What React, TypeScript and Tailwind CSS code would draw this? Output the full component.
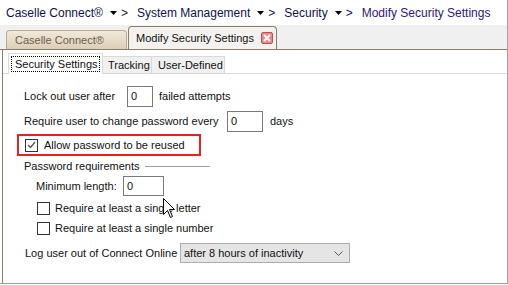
import React from "react";

function Caret() {
  return (
    <svg width="7" height="4" viewBox="0 0 7 4" className="ml-[7px]">
      <path d="M0 0H7L3.5 4Z" fill="#000" />
    </svg>
  );
}

function Crumb({ label, last }: { label: string; last?: boolean }) {
  return (
    <div className="flex items-center">
      <span className={last ? "text-[#2f1680]" : "text-[#10104a]"}>{label}</span>
      {!last && (
        <>
          <Caret />
          <span className="ml-[4px] mr-[9px] text-[#10104a]">&gt;</span>
        </>
      )}
    </div>
  );
}

function Checkbox({ checked }: { checked?: boolean }) {
  return (
    <div className="w-[13px] h-[13px] border border-[#333] bg-white flex items-center justify-center shrink-0">
      {checked && (
        <svg width="9" height="8" viewBox="0 0 9 8">
          <path d="M1 4L3.5 6.5L8 1" stroke="#555" strokeWidth="1.3" fill="none" />
        </svg>
      )}
    </div>
  );
}

function TextBox({ value, w }: { value: string; w: string }) {
  return (
    <div className={`${w} h-full border border-[#7a7a7a] bg-white pl-[3px] flex items-center`}>
      {value}
    </div>
  );
}

export default function App() {
  return (
    <div
      className="relative w-[508px] h-[284px] overflow-hidden bg-white border-r border-b border-[#a0a0a0] flex flex-col text-[11px] text-[#111]"
      style={{ fontFamily: '"Liberation Sans", Arial, sans-serif' }}
    >
      {/* breadcrumb */}
      <div className="h-[25px] flex items-center pl-[6px] text-[12px] whitespace-nowrap">
        <Crumb label="Caselle Connect®" />
        <Crumb label="System Management" />
        <Crumb label="Security" />
        <Crumb label="Modify Security Settings" last />
      </div>

      {/* document tabs */}
      <div className="h-[25px] bg-[#f0f0f0] border-b border-[#8b7d6b] flex items-end pl-[6px]">
        <div className="w-[121px] h-[19px] rounded-t-[4px] border border-b-0 border-[#b9ab94] bg-gradient-to-b from-[#f1e9da] to-[#dccfb6] text-[#6e5d4e] pl-[8px] flex items-center">
          Caselle Connect®
        </div>
        <div className="w-[149px] h-[23px] ml-[1px] rounded-t-[4px] border border-b-0 border-[#8b7d6b] bg-[#f3f2ef] pl-[7px] pr-[3px] flex items-center">
          <span>Modify Security Settings</span>
          <div className="ml-auto w-[12px] h-[12px] rounded-[2px] border border-[#c0504d] bg-[#e98c8c] flex items-center justify-center">
            <svg width="8" height="8" viewBox="0 0 8 8">
              <path d="M1 1L7 7M7 1L1 7" stroke="#fff" strokeWidth="2" />
            </svg>
          </div>
        </div>
      </div>

      {/* content */}
      <div className="flex-1 ml-[2px] border-l border-[#8b7d6b] flex flex-col">
        <div className="h-[24px] flex items-end pl-[5px] border-b border-[#d9d9d9]">
          <div className="w-[95px] h-[21px] -mb-px border border-b-0 border-[#d9d9d9] bg-white p-[2px]">
            <div className="h-full border border-dotted border-black flex items-center pl-[3px]">
              Security Settings
            </div>
          </div>
          <div className="w-[49px] h-[17px] border border-b-0 border-l-0 border-[#d9d9d9] bg-[#f0f0f0] flex items-center pl-[5px]">
            Tracking
          </div>
          <div className="w-[73px] h-[17px] border border-b-0 border-l-0 border-[#d9d9d9] bg-[#f0f0f0] flex items-center pl-[6px]">
            User-Defined
          </div>
        </div>

        <div className="flex flex-col pl-[21px]">
          <div className="mt-[12px] h-[21px] flex items-center">
            <span className="w-[103px]">Lock out user after</span>
            <TextBox value="0" w="w-[26px]" />
            <span className="ml-[6px]">failed attempts</span>
          </div>

          <div className="mt-[4px] h-[21px] flex items-center">
            <span className="w-[203px]">Require user to change password every</span>
            <TextBox value="0" w="w-[36px]" />
            <span className="ml-[7px]">days</span>
          </div>

          <div className="mt-[2px] -ml-[7px] w-[184px] h-[22px] border-2 border-[#e8201e] flex items-center pl-[6px]">
            <Checkbox checked />
            <span className="ml-[6px]">Allow password to be reused</span>
          </div>

          <div className="mt-[2px] h-[16px] flex items-center">
            <span>Password requirements</span>
            <div className="ml-[5px] w-[65px] h-px bg-[#a0a0a0]" />
          </div>

          <div className="mt-[2px] h-[20px] flex items-center pl-[12px]">
            <span className="w-[87px]">Minimum length:</span>
            <TextBox value="0" w="w-[41px]" />
          </div>

          <div className="mt-[4px] h-[16px] flex items-center pl-[13px]">
            <Checkbox />
            <span className="ml-[5px]">Require at least a single letter</span>
          </div>

          <div className="mt-[4px] h-[16px] flex items-center pl-[13px]">
            <Checkbox />
            <span className="ml-[5px]">Require at least a single number</span>
          </div>

          <div className="mt-[7px] h-[20px] flex items-center pl-[1px]">
            <span className="w-[155px]">Log user out of Connect Online</span>
            <div className="w-[170px] h-full border border-[#adadad] bg-[#e5e5e5] flex items-center pl-[3px] pr-[6px]">
              <span>after 8 hours of inactivity</span>
              <svg width="9" height="5" viewBox="0 0 9 5" className="ml-auto">
                <path d="M0.5 0.5L4.5 4.5L8.5 0.5" stroke="#555" fill="none" />
              </svg>
            </div>
          </div>
        </div>
      </div>

      {/* mouse pointer */}
      <svg width="13" height="21" viewBox="0 0 13 21" className="absolute left-[163px] top-[198px]">
        <path d="M0.5 0.5V16.5L4.5 12.5L7.5 19.5L9.5 18.5L6.5 11.5H11.5Z" fill="#fff" stroke="#000" />
      </svg>
    </div>
  );
}
